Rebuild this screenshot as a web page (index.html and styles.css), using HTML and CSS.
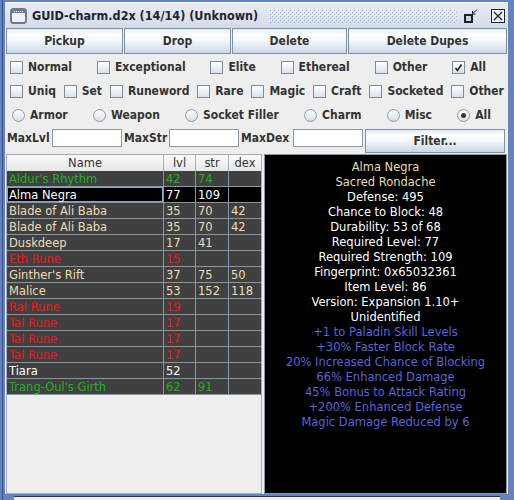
FILE: index.html
```html
<!DOCTYPE html>
<html>
<head>
<meta charset="utf-8">
<link rel="stylesheet" href="styles.css">
</head>
<body>
<div class="frame">
  <div class="titlebar">
    <svg class="ticon" width="17" height="16" viewBox="0 0 17 16">
      <rect x="1" y="1" width="15" height="14" rx="2.5" fill="#EEF1F6" stroke="#6F7A89" stroke-width="2"/>
      <rect x="1.5" y="1.5" width="14" height="3.5" fill="#6F7A89"/>
      <g fill="#FFFFFF"><rect x="4" y="3" width="1" height="1"/><rect x="6" y="3" width="1" height="1"/><rect x="8" y="3" width="1" height="1"/><rect x="10" y="3" width="1" height="1"/><rect x="12" y="3" width="1" height="1"/></g>
    </svg>
    <span class="title">GUID-charm.d2x (14/14) (Unknown)</span>
    <svg class="bumps" height="14">
      <defs>
        <pattern id="bp" width="4" height="4" patternUnits="userSpaceOnUse">
          <rect x="0" y="0" width="1" height="1" fill="#FFFFFF"/>
          <rect x="1" y="1" width="1" height="1" fill="#9AAED3"/>
          <rect x="2" y="2" width="1" height="1" fill="#FFFFFF"/>
          <rect x="3" y="3" width="1" height="1" fill="#9AAED3"/>
        </pattern>
      </defs>
      <rect width="100%" height="100%" fill="url(#bp)"/>
    </svg>
    <svg class="iconify" width="14" height="16" viewBox="0 0 14 16">
      <rect x="1" y="7" width="7" height="7" fill="#C9D6EA" stroke="#222" stroke-width="2"/>
      <line x1="13" y1="1.5" x2="9" y2="5.5" stroke="#222" stroke-width="1"/>
      <path d="M8.5 3 L8.5 6 L11.5 6" fill="none" stroke="#222" stroke-width="1"/>
    </svg>
    <svg class="closeb" width="14" height="14" viewBox="0 0 14 14">
      <rect x="0.5" y="0.5" width="13" height="13" fill="#E6ECF5" stroke="#222"/>
      <rect x="1.5" y="1.5" width="11" height="11" fill="none" stroke="#FFFFFF"/>
      <path d="M3 3 L11 11 M11 3 L3 11" stroke="#222" stroke-width="1.2"/>
    </svg>
  </div>

  <div class="content">
    <div class="buttons">
      <div class="btn">Pickup</div>
      <div class="btn">Drop</div>
      <div class="btn">Delete</div>
      <div class="btn">Delete Dupes</div>
    </div>

    <div class="optrow row1">
      <div class="opt"><span class="cb"></span>Normal</div>
      <div class="opt"><span class="cb"></span>Exceptional</div>
      <div class="opt"><span class="cb"></span>Elite</div>
      <div class="opt"><span class="cb"></span>Ethereal</div>
      <div class="opt"><span class="cb"></span>Other</div>
      <div class="opt"><span class="cb"><svg width="11" height="11" viewBox="0 0 11 11"><path d="M2.5 6 L4.5 8.5 L8.5 2.5" fill="none" stroke="#222" stroke-width="1.6"/></svg></span>All</div>
    </div>

    <div class="optrow row2">
      <div class="opt"><span class="cb"></span>Uniq</div>
      <div class="opt"><span class="cb"></span>Set</div>
      <div class="opt"><span class="cb"></span>Runeword</div>
      <div class="opt"><span class="cb"></span>Rare</div>
      <div class="opt"><span class="cb"></span>Magic</div>
      <div class="opt"><span class="cb"></span>Craft</div>
      <div class="opt"><span class="cb"></span>Socketed</div>
      <div class="opt"><span class="cb"></span>Other</div>
    </div>

    <div class="optrow row3">
      <div class="opt"><span class="rb"></span>Armor</div>
      <div class="opt"><span class="rb"></span>Weapon</div>
      <div class="opt"><span class="rb"></span>Socket Filler</div>
      <div class="opt"><span class="rb"></span>Charm</div>
      <div class="opt"><span class="rb"></span>Misc</div>
      <div class="opt"><span class="rb on"></span>All</div>
    </div>

    <div class="fieldrow">
      <span class="flabel l1">MaxLvl</span>
      <span class="field"></span>
      <span class="flabel l2">MaxStr</span>
      <span class="field"></span>
      <span class="flabel l3">MaxDex</span>
      <span class="field"></span>
      <div class="btn filter">Filter...</div>
    </div>

    <div class="main">
      <div class="tablepane">
        <div class="trow thead">
          <div class="th">Name</div><div class="th">lvl</div><div class="th">str</div><div class="th">dex</div>
        </div>
        <div class="trow set"><div class="td">Aldur's Rhythm</div><div class="td">42</div><div class="td">74</div><div class="td"></div></div>
        <div class="trow sel"><div class="td focus">Alma Negra</div><div class="td">77</div><div class="td">109</div><div class="td"></div></div>
        <div class="trow uniq"><div class="td">Blade of Ali Baba</div><div class="td">35</div><div class="td">70</div><div class="td">42</div></div>
        <div class="trow uniq"><div class="td">Blade of Ali Baba</div><div class="td">35</div><div class="td">70</div><div class="td">42</div></div>
        <div class="trow uniq"><div class="td">Duskdeep</div><div class="td">17</div><div class="td">41</div><div class="td"></div></div>
        <div class="trow rune"><div class="td">Eth Rune</div><div class="td">15</div><div class="td"></div><div class="td"></div></div>
        <div class="trow uniq"><div class="td">Ginther's Rift</div><div class="td">37</div><div class="td">75</div><div class="td">50</div></div>
        <div class="trow uniq"><div class="td">Malice</div><div class="td">53</div><div class="td">152</div><div class="td">118</div></div>
        <div class="trow rune"><div class="td">Ral Rune</div><div class="td">19</div><div class="td"></div><div class="td"></div></div>
        <div class="trow rune"><div class="td">Tal Rune</div><div class="td">17</div><div class="td"></div><div class="td"></div></div>
        <div class="trow rune"><div class="td">Tal Rune</div><div class="td">17</div><div class="td"></div><div class="td"></div></div>
        <div class="trow rune"><div class="td">Tal Rune</div><div class="td">17</div><div class="td"></div><div class="td"></div></div>
        <div class="trow norm"><div class="td">Tiara</div><div class="td">52</div><div class="td"></div><div class="td"></div></div>
        <div class="trow set"><div class="td">Trang-Oul's Girth</div><div class="td">62</div><div class="td">91</div><div class="td"></div></div>
      </div>
      <div class="info">
        <div class="gold">Alma Negra</div>
        <div class="gold">Sacred Rondache</div>
        <div>Defense: 495</div>
        <div>Chance to Block: 48</div>
        <div>Durability: 53 of 68</div>
        <div>Required Level: 77</div>
        <div>Required Strength: 109</div>
        <div>Fingerprint: 0x65032361</div>
        <div>Item Level: 86</div>
        <div>Version: Expansion 1.10+</div>
        <div>Unidentified</div>
        <div class="magic">+1 to Paladin Skill Levels</div>
        <div class="magic">+30% Faster Block Rate</div>
        <div class="magic">20% Increased Chance of Blocking</div>
        <div class="magic">66% Enhanced Damage</div>
        <div class="magic">45% Bonus to Attack Rating</div>
        <div class="magic">+200% Enhanced Defense</div>
        <div class="magic">Magic Damage Reduced by 6</div>
      </div>
    </div>
  </div>
  <div class="below"><div class="status"></div></div>
</div>
</body>
</html>
```

FILE: styles.css
```css
html, body {
  margin: 0;
  padding: 0;
}
body {
  width: 514px;
  height: 500px;
  overflow: hidden;
  background: #6382BF;
  box-shadow: inset 2px 0 0 #6382BF, inset 3px 0 0 #3B4F80;
  font-family: "DejaVu Sans", sans-serif;
  color: #333333;
}
.frame {
  padding: 2px 6px 0 5px;
}
.titlebar {
  height: 26px;
  display: flex;
  align-items: center;
  background: linear-gradient(#E9EDF4, #D3DBE8);
  border-top: 1px solid #F6F8FB;
  box-sizing: border-box;
}
.ticon {
  margin-left: 5px;
  flex: none;
}
.title {
  margin-left: 5px;
  font-family: "DejaVu Sans Condensed", "DejaVu Sans", sans-serif;
  font-weight: bold;
  font-size: 12.5px;
  color: #222233;
  white-space: nowrap;
}
.bumps {
  flex: 1;
  margin: 0 7px 0 11px;
  height: 14px;
}
.iconify {
  flex: none;
  margin-right: 13px;
}
.closeb {
  flex: none;
  margin-right: 3px;
}
.content {
  background: #EEEEEE;
  height: 466px;
  padding: 0 1px;
  box-sizing: border-box;
  border-bottom: 1px solid #F8F8F8;
}
.buttons {
  display: grid;
  grid-template-columns: 117px 107px 115px 1fr;
  column-gap: 1px;
  height: 26px;
}
.btn {
  box-sizing: border-box;
  border: 1px solid #7F8FA0;
  background: linear-gradient(#E4ECF5 0%, #FFFFFF 25%, #F3F6FA 50%, #C9D8E9 100%);
  display: flex;
  align-items: center;
  justify-content: center;
  font-family: "DejaVu Sans Condensed", "DejaVu Sans", sans-serif;
  font-weight: bold;
  font-size: 12px;
  color: #333333;
}
.optrow {
  display: flex;
  justify-content: space-between;
  align-items: center;
  height: 24px;
}
.row1 {
  margin-top: 1px;
  padding: 0 21px 0 4px;
}
.row2 {
  padding: 0 3px 0 4px;
}
.row3 {
  padding: 0 16px 0 6px;
}
.opt {
  display: flex;
  align-items: center;
  gap: 5px;
  font-family: "DejaVu Sans Condensed", "DejaVu Sans", sans-serif;
  font-weight: bold;
  font-size: 12px;
  color: #333333;
  white-space: nowrap;
}
.cb {
  width: 13px;
  height: 13px;
  box-sizing: border-box;
  border: 1px solid #7D8B9A;
  background: linear-gradient(#FFFFFF, #D9E2EC);
  display: flex;
  align-items: center;
  justify-content: center;
}
.rb {
  width: 13px;
  height: 13px;
  box-sizing: border-box;
  border: 1px solid #8E9AA8;
  border-radius: 50%;
  background: linear-gradient(#FFFFFF, #D5DEE9);
  display: flex;
  align-items: center;
  justify-content: center;
}
.rb.on::after {
  content: "";
  width: 5px;
  height: 5px;
  border-radius: 50%;
  background: #333333;
}
.fieldrow {
  margin-top: 2px;
  height: 24px;
  display: grid;
  grid-template-columns: 46px 70px 47px 70px 54px 70px 142px;
  column-gap: 0;
  align-items: start;
}
.flabel {
  font-family: "DejaVu Sans Condensed", "DejaVu Sans", sans-serif;
  font-weight: bold;
  font-size: 12px;
  color: #333333;
  line-height: 18px;
  white-space: nowrap;
}
.l1 { padding-left: 1px; }
.l2 { padding-left: 2px; }
.l3 { padding-left: 2px; }
.field {
  height: 18px;
  box-sizing: border-box;
  border: 1px solid #8E98A4;
  background: #FFFFFF;
}
.filter {
  margin-left: 2px;
  height: 24px;
}
.main {
  margin-top: 1px;
  display: flex;
  gap: 2px;
  height: 340px;
}
.tablepane {
  width: 256px;
  box-sizing: border-box;
  border: 1px solid #A6AFB9;
  background: #EEEEEE;
  flex: none;
}
.trow {
  display: grid;
  grid-template-columns: 157px 32px 33px 32px;
  height: 16px;
}
.th {
  box-sizing: border-box;
  border-right: 1px solid #A4ACB6;
  border-bottom: 1px solid #A4ACB6;
  background: linear-gradient(#FBFBFB, #E6E6E6);
  text-align: center;
  font-size: 11.5px;
  line-height: 16px;
  color: #333333;
}
.td {
  box-sizing: border-box;
  border-right: 1px solid #8795A8;
  border-bottom: 1px solid #8795A8;
  background: #404040;
  font-size: 11.5px;
  line-height: 16px;
  padding-left: 2px;
  white-space: nowrap;
  overflow: hidden;
}
.th:last-child, .td:last-child {
  border-right: none;
}
.set .td { color: #1DB41D; }
.uniq .td { color: #EEDDB0; }
.rune .td { color: #F01818; }
.norm .td { color: #FFFFFF; }
.sel .td {
  background: #000000;
  color: #FFFFFF;
}
.sel .td.focus {
  box-shadow: inset 0 0 0 1px #8FA3C6;
}
.info {
  flex: 1;
  box-sizing: border-box;
  border: 1px solid #8A96A4;
  background: #000000;
  color: #FFFFFF;
  text-align: center;
  font-size: 11.5px;
  line-height: 15px;
  padding-top: 5px;
}
.info .gold { color: #E9DCAE; }
.info .magic { color: #5B63DA; }
.below {
  height: 6px;
  padding-top: 2px;
  box-sizing: border-box;
}
.status {
  margin: 0 8px 0 9px;
  height: 4px;
  border-top: 1px solid #2E3340;
  background: #EEEEEE;
}
```
